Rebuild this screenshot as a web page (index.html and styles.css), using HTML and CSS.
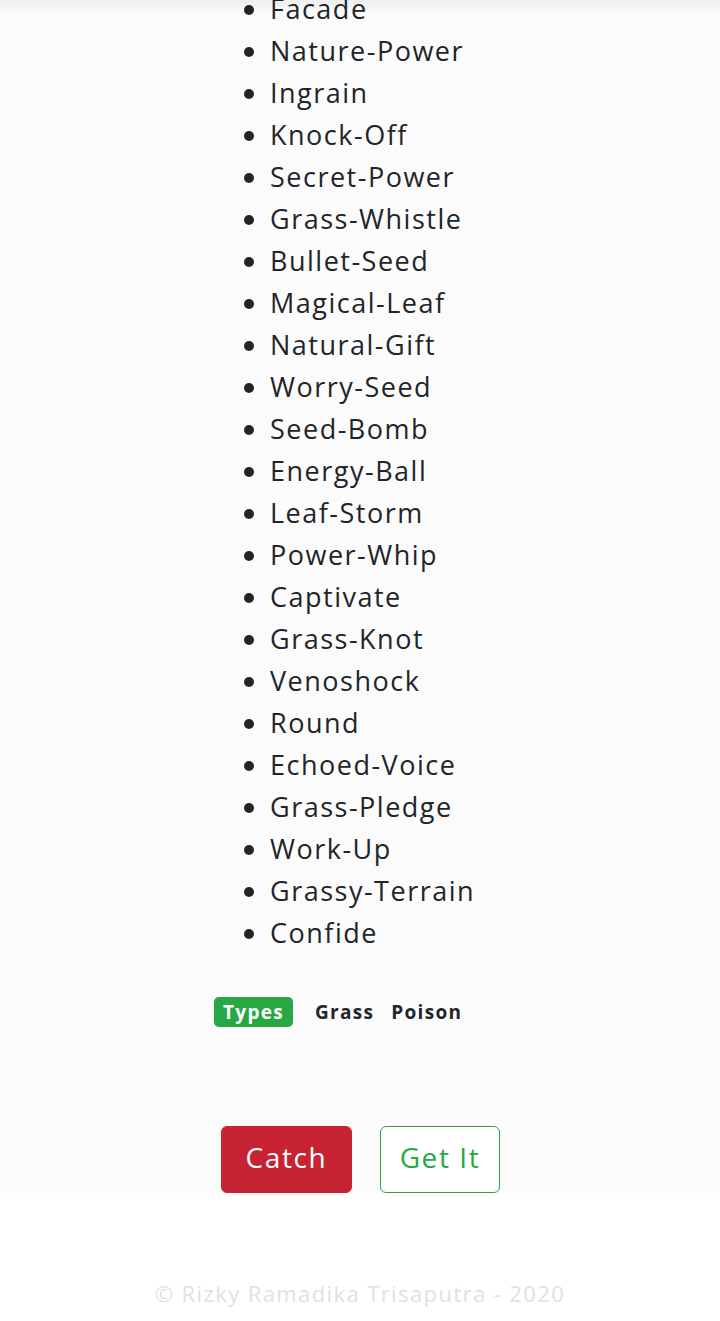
FILE: index.html
```html
<!DOCTYPE html>
<html>
<head>
<meta charset="utf-8">
<link rel="stylesheet" href="styles.css">
</head>
<body>
<div class="top-shadow"></div>
<main class="detail">
  <ul class="moves">
    <li>Facade</li>
    <li>Nature-Power</li>
    <li>Ingrain</li>
    <li>Knock-Off</li>
    <li>Secret-Power</li>
    <li>Grass-Whistle</li>
    <li>Bullet-Seed</li>
    <li>Magical-Leaf</li>
    <li>Natural-Gift</li>
    <li>Worry-Seed</li>
    <li>Seed-Bomb</li>
    <li>Energy-Ball</li>
    <li>Leaf-Storm</li>
    <li>Power-Whip</li>
    <li>Captivate</li>
    <li>Grass-Knot</li>
    <li>Venoshock</li>
    <li>Round</li>
    <li>Echoed-Voice</li>
    <li>Grass-Pledge</li>
    <li>Work-Up</li>
    <li>Grassy-Terrain</li>
    <li>Confide</li>
  </ul>
  <div class="types">
    <span class="badge">Types</span>
    <span class="type type-first">Grass</span>
    <span class="type">Poison</span>
  </div>
  <div class="actions">
    <button class="btn btn-catch">Catch</button>
    <button class="btn btn-get">Get It</button>
  </div>
</main>
<footer class="footer">© Rizky Ramadika Trisaputra - 2020</footer>
</body>
</html>
```

FILE: styles.css
```css
html, body {
  margin: 0;
  padding: 0;
  background: #ffffff;
}
body {
  font-family: "Open Sans", "DejaVu Sans", sans-serif;
  color: #212529;
}
.top-shadow {
  position: fixed;
  top: 0;
  left: 0;
  right: 0;
  height: 0;
  box-shadow: 0 0 12px 3px rgba(0, 0, 0, 0.12);
}
.detail {
  background: #fbfbfb;
  height: 1193px;
  overflow: hidden;
}
.moves {
  margin: -12px 0 0 0;
  padding: 0 0 0 270px;
  font-size: 27px;
  line-height: 42px;
  letter-spacing: 1.5px;
}
.types {
  display: flex;
  align-items: center;
  margin: 43px 0 0 214px;
  height: 30px;
  font-size: 19px;
  font-weight: 700;
  letter-spacing: 1.3px;
}
.badge {
  background: #28a745;
  color: #ffffff;
  border-radius: 5px;
  padding: 0 9px;
  height: 30px;
  line-height: 30px;
}
.type {
  margin-left: 17px;
}
.type-first {
  margin-left: 22px;
}
.actions {
  display: flex;
  justify-content: center;
  gap: 28px;
  margin-top: 99px;
  padding-left: 1px;
}
.btn {
  font-family: inherit;
  font-size: 28px;
  letter-spacing: 1.6px;
  height: 67px;
  border-radius: 6px;
  padding: 0 0 5px 0;
  cursor: pointer;
}
.btn-catch {
  background: #c82333;
  color: #ffffff;
  border: 1px solid #c82333;
  width: 131px;
}
.btn-get {
  background: #ffffff;
  color: #28a745;
  border: 1px solid #28a745;
  width: 120px;
}
.footer {
  height: 128px;
  box-sizing: border-box;
  padding-top: 86px;
  text-align: center;
  font-size: 22px;
  line-height: 28px;
  letter-spacing: 1.4px;
  color: #dee2e6;
}
```
